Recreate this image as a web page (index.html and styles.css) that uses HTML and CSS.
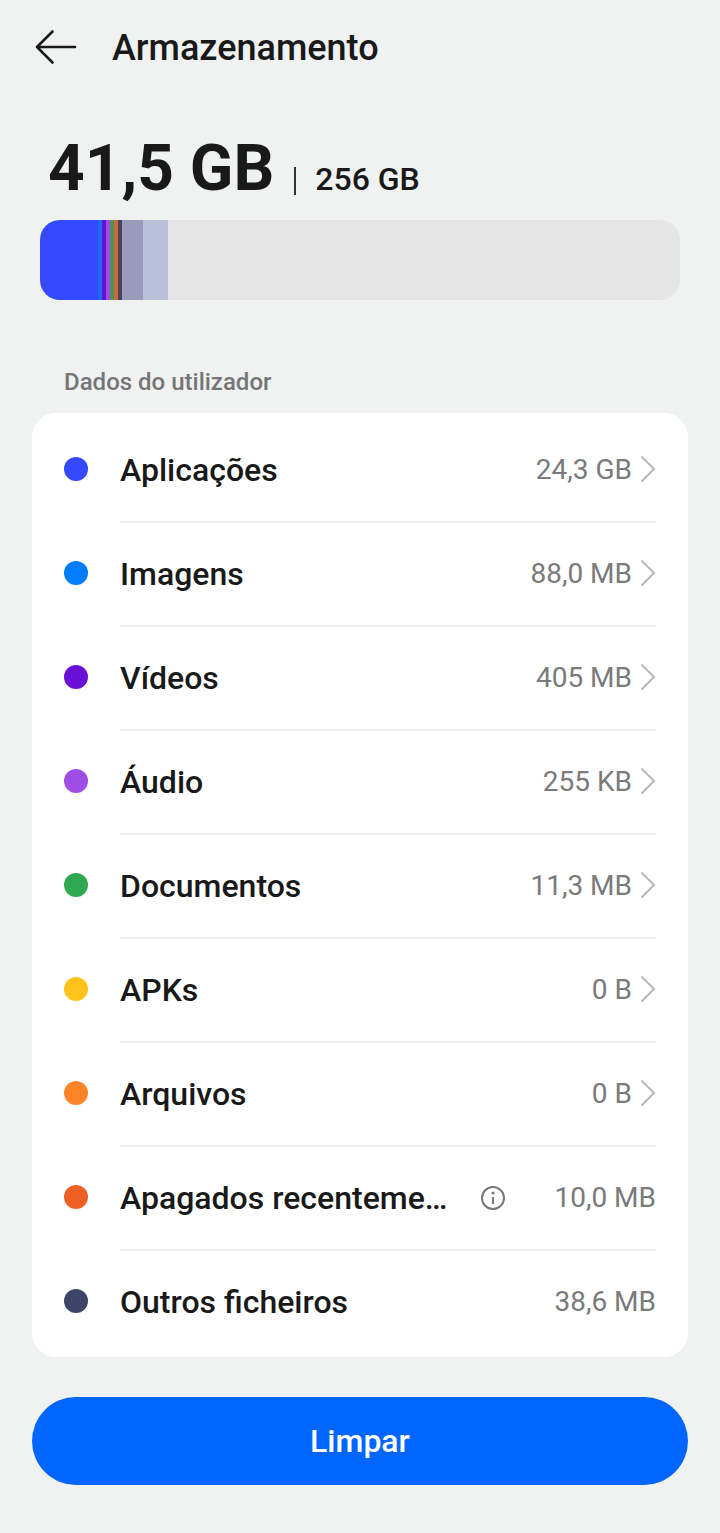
FILE: index.html
```html
<!DOCTYPE html>
<html lang="pt">
<head>
<meta charset="utf-8">
<meta name="viewport" content="width=device-width, initial-scale=1">
<title>Armazenamento</title>
<link rel="stylesheet" href="styles.css">
</head>
<body>
<header class="top-bar">
  <button class="back" type="button" aria-label="Voltar">
    <svg width="44" height="40" viewBox="0 0 44 40" fill="none" stroke="currentColor" stroke-width="2.600" stroke-linecap="round" stroke-linejoin="round" aria-hidden="true"><path d="M18.500 3.500 3 19 18.500 34.500M3 19H41"/></svg>
  </button>
  <h1 class="title">Armazenamento</h1>
</header>
<main>
  <section class="summary">
    <p class="usage"><strong class="used">41,5 GB</strong><span class="separator"></span><span class="total">256 GB</span></p>
    <div class="meter">
      <span class="part apps" style="width:9.1%"></span>
      <span class="part images" style="width:.6%"></span>
      <span class="part videos" style="width:.6%"></span>
      <span class="part audio" style="width:.6%"></span>
      <span class="part docs" style="width:.7%"></span>
      <span class="part deleted" style="width:.6%"></span>
      <span class="part other" style="width:.6%"></span>
      <span class="part system" style="width:3.3%"></span>
      <span class="part reserved" style="width:3.9%"></span>
    </div>
  </section>
  <section class="data">
    <h2 class="section-title">Dados do utilizador</h2>
    <ul class="card">
      <li class="item"><span class="dot apps"></span><a class="row" href="#"><span class="name">Aplicações</span><span class="size">24,3 GB</span><svg class="chevron" viewBox="0 0 16 28" aria-hidden="true"><path d="m2 2 12 12L2 26"/></svg></a></li>
      <li class="item"><span class="dot images"></span><a class="row" href="#"><span class="name">Imagens</span><span class="size">88,0 MB</span><svg class="chevron" viewBox="0 0 16 28" aria-hidden="true"><path d="m2 2 12 12L2 26"/></svg></a></li>
      <li class="item"><span class="dot videos"></span><a class="row" href="#"><span class="name">Vídeos</span><span class="size">405 MB</span><svg class="chevron" viewBox="0 0 16 28" aria-hidden="true"><path d="m2 2 12 12L2 26"/></svg></a></li>
      <li class="item"><span class="dot audio"></span><a class="row" href="#"><span class="name">Áudio</span><span class="size">255 KB</span><svg class="chevron" viewBox="0 0 16 28" aria-hidden="true"><path d="m2 2 12 12L2 26"/></svg></a></li>
      <li class="item"><span class="dot docs"></span><a class="row" href="#"><span class="name">Documentos</span><span class="size">11,3 MB</span><svg class="chevron" viewBox="0 0 16 28" aria-hidden="true"><path d="m2 2 12 12L2 26"/></svg></a></li>
      <li class="item"><span class="dot apks"></span><a class="row" href="#"><span class="name">APKs</span><span class="size">0 B</span><svg class="chevron" viewBox="0 0 16 28" aria-hidden="true"><path d="m2 2 12 12L2 26"/></svg></a></li>
      <li class="item"><span class="dot archives"></span><a class="row" href="#"><span class="name">Arquivos</span><span class="size">0 B</span><svg class="chevron" viewBox="0 0 16 28" aria-hidden="true"><path d="m2 2 12 12L2 26"/></svg></a></li>
      <li class="item"><span class="dot deleted"></span><div class="row"><span class="name">Apagados recenteme…</span><button class="info" type="button" aria-label="Informações"><svg width="26" height="26" viewBox="0 0 26 26" fill="none" stroke="currentColor" stroke-width="2" aria-hidden="true"><circle cx="13" cy="13" r="11"/><path d="M13 12v7"/><circle cx="13" cy="8" r="1.500" fill="currentColor" stroke="none"/></svg></button><span class="size">10,0 MB</span></div></li>
      <li class="item"><span class="dot other"></span><div class="row"><span class="name">Outros ficheiros</span><span class="size">38,6 MB</span></div></li>
    </ul>
  </section>
  <button class="clean" type="button">Limpar</button>
</main>
</body>
</html>
```
FILE: styles.css
```css
* { box-sizing: border-box; }
body {
  margin: 0;
  background: #f0f1f1;
  color: #191919;
  font-family: Roboto, "Noto Sans", sans-serif;
}
h1, h2, p, ul { margin: 0; padding: 0; }
button { border: 0; padding: 0; background: none; font: inherit; color: inherit; cursor: pointer; }
main { padding: 0 32px 48px; }

.top-bar { display: flex; align-items: center; gap: 34px; padding: 25px 34px 0; }
.back { display: flex; }
.title { font-size: 36px; line-height: 46px; font-weight: 500; }

.summary { padding: 60px 8px 0; }
.usage { display: flex; align-items: baseline; padding: 0 8px; line-height: 76px; }
.used { font-size: 64px; font-weight: 700; }
.separator { width: 2px; height: 28px; margin: 0 19px 22px 20px; background: #333; align-self: flex-end; }
.total { font-size: 32px; font-weight: 500; }
.meter { display: flex; height: 80px; margin-top: 3px; border-radius: 20px; background: #e5e5e5; overflow: hidden; }

.apps { background: #3549ff; }
.images { background: #007dff; }
.videos { background: #6a0fd6; }
.audio { background: #a04de6; }
.docs { background: #2fa84f; }
.apks { background: #ffc31a; }
.archives { background: #ff8429; }
.deleted { background: #ed5f25; }
.other { background: #3c4468; }
.part.images { background: #1b6cf5; }
.part.docs { background: #4c9358; }
.part.deleted { background: #cc6b38; }
.part.other { background: #4c405c; }
.system { background: #9a9aba; }
.reserved { background: #bbc0da; }

.section-title { padding: 67px 32px 16px; font-size: 24px; line-height: 30px; font-weight: 500; color: #747676; }
.card { padding: 6px 32px 2px; border-radius: 24px; background: #fff; list-style: none; }
.item { display: flex; align-items: center; gap: 32px; }
.dot { flex: none; width: 24px; height: 24px; margin-bottom: 4px; border-radius: 50%; }
.row { flex: 1; display: flex; align-items: center; min-width: 0; height: 104px; color: inherit; text-decoration: none; border-bottom: 2px solid #ededed; }
.item:last-child .row { border-bottom-color: transparent; }
.name { flex: 1; min-width: 0; overflow: hidden; text-overflow: ellipsis; white-space: nowrap; font-size: 32px; line-height: 44px; font-weight: 500; }
.size { font-size: 28px; line-height: 36px; color: #7a7a7a; white-space: nowrap; }
.chevron { flex: none; width: 16px; height: 28px; margin: 0 0 2px 8px; fill: none; stroke: #b8b8b8; stroke-width: 2; stroke-linecap: round; stroke-linejoin: round; }
.info { display: flex; margin: 0 48px 0 24px; color: #777; }

.clean { display: block; width: 100%; height: 88px; margin-top: 40px; border-radius: 44px; background: #0066ff; color: #fff; font-size: 32px; font-weight: 500; }
```
